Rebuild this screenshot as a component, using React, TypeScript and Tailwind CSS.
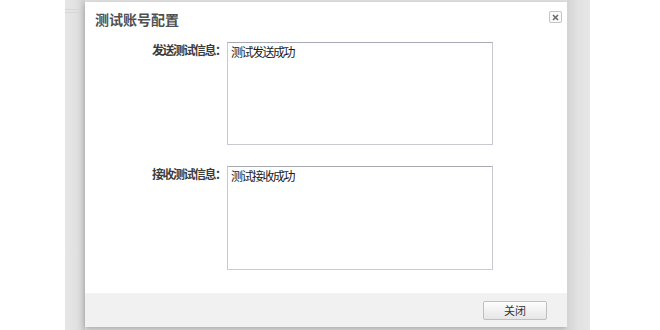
const CJK = "font-['Noto_Sans_CJK_SC','Noto_Sans',sans-serif]";

function Field({ label, value, tall }: { label: string; value: string; tall?: boolean }) {
  return (
    <div className="flex items-start">
      <div className="flex w-[142px] justify-end pt-[1px] text-[12px] leading-[14px] font-bold text-[#3c3c3c]">
        <span className="tracking-[-1.5px]">{label}</span>
        <span className="w-[12px]">：</span>
      </div>
      <textarea
        readOnly
        defaultValue={value}
        className={`${tall ? "h-[104px]" : "h-[103px]"} w-[266px] resize-none overflow-hidden border border-[#c9c9d6] border-t-[#a9a9b6] bg-white px-[3px] py-[2px] text-[12px] leading-[14px] tracking-[-1.5px] text-[#1a1a1a] outline-none ${CJK}`}
      />
    </div>
  );
}

export default function App() {
  return (
    <div className={`flex h-[330px] w-[660px] overflow-hidden bg-white ${CJK}`}>
      <div className="w-[65px] shrink-0" />

      <div className="flex w-[525px] shrink-0 bg-[#e4e4e4]">
        {/* page behind the overlay */}
        <div className="flex w-[20px] shrink-0 flex-col bg-gradient-to-r from-[#e6e6e6] via-[#e2e2e2] to-[#d2d2d2]">
          <div className="h-[10px] border-b border-[#d6d6d6]" />
          <div className="h-[3px] border-b border-[#d6d6d6]" />
        </div>

        <div className="mt-[2px] flex h-[325px] w-[482px] shrink-0 flex-col bg-white shadow-[0_2px_6px_rgba(0,0,0,0.28)]">
          <div className="flex h-[32px] shrink-0 items-start justify-between pl-[10px] pr-[5px]">
            <h1 className="mt-[9px] text-[14px] leading-[16px] font-bold text-[#505050]">测试账号配置</h1>
            <button
              type="button"
              className="mt-[9px] flex h-[12px] w-[13px] items-center justify-center rounded-[2px] border border-[#c4c4c4] bg-[#fafafa]"
            >
              <svg width="7" height="7" viewBox="0 0 7 7">
                <path d="M1 1L6 6M6 1L1 6" stroke="#6a6a6a" strokeWidth="1.6" />
              </svg>
            </button>
          </div>

          <div className="flex flex-1 flex-col gap-[21px] pt-[8px]">
            <Field label="发送测试信息" value="测试发送成功" />
            <Field label="接收测试信息" value="测试接收成功" tall />
          </div>

          <div className="flex h-[34px] shrink-0 items-center justify-end border-t border-[#f4f4f4] bg-[#f1f1f1] pr-[20px]">
            <button
              type="button"
              className="h-[19px] w-[64px] rounded-[2px] border border-[#bfbfbf] bg-gradient-to-b from-[#fdfdfd] to-[#e6e6e6] text-[11px] leading-[17px] text-[#333333]"
            >
              关闭
            </button>
          </div>
        </div>

        <div className="w-[23px] shrink-0 bg-gradient-to-r from-[#d4d4d4] via-[#e2e2e2] to-[#e6e6e6]" />
      </div>

      <div className="flex-1" />
    </div>
  );
}
